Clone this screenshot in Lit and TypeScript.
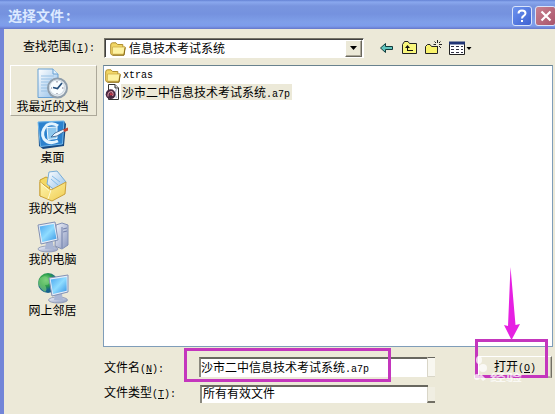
import { LitElement, html, css, svg } from "lit";
import { customElement, property } from "lit/decorators.js";

const folder = html`<svg width="16" height="14" viewBox="0 0 16 14">
  <path d="M.7 3Q.7 .8 2.500 .8H6L7.500 2.500H12.800V5H15L13.800 13H2.500Q.7 13 .7 11Z" fill="#f1d665" stroke="#b08f30"/>
  <path d="M2.500 5H15.200L13.700 12.200H2.400Z" fill="#fdf2a2" stroke="#cfae4a" stroke-width=".8"/>
  <path d="M15.200 5.500L14 13.200H2.500" fill="none" stroke="#8c6d1a"/></svg>`;

const fileIcon = html`<svg width="16" height="16" viewBox="0 0 16 16">
  <path d="M3.500 .5H10L13.500 4V15.500H3.500Z" fill="#fff" stroke="#333"/>
  <path d="M10 .5V4H13.500" fill="#ddd" stroke="#333"/>
  <path d="M12 5Q9 8 11.500 14" fill="none" stroke="#b9c0d8" stroke-width="1.400"/>
  <circle cx="5.600" cy="10.200" r="4.900" fill="#472840"/><path d="M3 12.500Q2.500 8 6.500 7.500Q9 9 7.500 12" fill="none" stroke="#d18b9b" stroke-width="1.200"/>
  <path d="M5.500 8.500L8.500 11L4.500 11.500Z" fill="#c23a4a"/></svg>`;

const defs = svg`<defs>
  <linearGradient id="s" x1="0" y1="0" x2="1" y2="1"><stop offset="0" stop-color="#4aa5ee"/><stop offset=".5" stop-color="#8fdcff"/><stop offset="1" stop-color="#3794e4"/></linearGradient>
  <linearGradient id="p" x1="0" y1="0" x2="1" y2="1"><stop offset="0" stop-color="#fff"/><stop offset="1" stop-color="#8cbce8"/></linearGradient>
  <linearGradient id="y" x1="0" y1="0" x2="1" y2="1"><stop offset="0" stop-color="#fff6b0"/><stop offset="1" stop-color="#efcc50"/></linearGradient>
  <linearGradient id="g" x1="0" y1="0" x2="1" y2="1"><stop offset="0" stop-color="#f4f6fc"/><stop offset="1" stop-color="#8795bd"/></linearGradient>
  <radialGradient id="e" cx=".4" cy=".35"><stop offset="0" stop-color="#8fe48d"/><stop offset=".6" stop-color="#2b9d4a"/><stop offset="1" stop-color="#17628c"/></radialGradient>
</defs>`;

const art: Record<string, unknown> = {
  recent: svg`<path d="M1 1H16L21 6V29.500H1Z" fill="url(#p)" stroke="#69a0d2"/><path d="M16 1V6H21" fill="#e1f1fc" stroke="#69a0d2"/>
    <path d="M4 8H17M4 11H15M4 14H12M4 17H11M4 20H10M4 23H10" stroke="#99c1e5"/>
    <circle cx="20.500" cy="20" r="9.500" fill="#e9edf0" stroke="#8e9dab" stroke-width="2"/><circle cx="20" cy="19.500" r="7.500" fill="#f9fdff" stroke="#c8d4df"/>
    <path d="M25 15L20.500 20.500L16 19.500" fill="none" stroke="#254f7c" stroke-width="1.700"/><path d="M20 13V14.500M20 25V26M14 20H15M25 20H26.500" stroke="#777788"/>`,
  desktop: svg`<path d="M1 3L27 2L29 5L27 27L6 30L2 27Z" fill="#164a83"/><path d="M1 3L27 2L25.500 25L3.500 27.500Z" fill="#2c82ce" stroke="#72b9ed"/>
    <path d="M21 7Q16 3 10 6Q3 13 7 20Q12 26 21 22" fill="none" stroke="#e4f5ff" stroke-width="3"/>
    <path d="M10 8.500L20 8V19.500L11 20.500Z" fill="#8fc8ee" stroke="#f1faff"/>
    <path d="M14 18L18 14L27 10L28 12L20 17Z" fill="#eef7ff" stroke="#3f6a96" stroke-width=".9"/><path d="M26 10.500L31 8.500L31 11.500L27.500 13Z" fill="#c34432"/>`,
  docs: svg`<path d="M3 10L9 7L13 9L12 27L3 26Z" fill="#f3d865" stroke="#c99d28"/>
    <path d="M12 2L20 1L29 12L20 22L10 14Z" fill="url(#p)" stroke="#78add7"/><path d="M15 6L23 12M14 9L21 15" stroke="#83bce9"/>
    <path d="M3 12L14 20L29 12L28 24L15 31L3 26Z" fill="url(#y)" stroke="#cba13a"/><path d="M14 20L11 29M3.500 13L12 20.500" stroke="#fffbd4" fill="none"/>`,
  computer: svg`<path d="M19 4L25 2L31 4V24L25 28L18 25Z" fill="url(#g)" stroke="#8290b4"/><path d="M25 6V27M26 8L30 7M26 11L30 10" stroke="#7381aa"/>
    <ellipse cx="11" cy="28" rx="10" ry="3" fill="url(#g)" stroke="#8792b0" stroke-width=".8"/><path d="M9 21H16L17 28H8Z" fill="#a9b6d4"/>
    <path d="M1 4L18 1L21 19L4 23Z" fill="#e6edf8" stroke="#8291b4"/><path d="M2.600 5.600L16.800 3L19.500 17.700L5.200 21Z" fill="url(#s)"/>`,
  network: svg`<circle cx="11" cy="11" r="10" fill="url(#e)"/><path d="M3 6Q9 2 11 7Q14 13 8 13Q11 18 8 20Q2 16 1 11" fill="#76cb76" opacity=".7"/>
    <ellipse cx="21" cy="28" rx="9.500" ry="3" fill="url(#g)" stroke="#8792b0" stroke-width=".8"/><path d="M18 22H25L26 28H17Z" fill="#a9b6d4"/>
    <path d="M12 6L31 3L31 20L15 24Z" fill="#e6edf8" stroke="#8291b4"/><path d="M13.700 7.600L29.600 5L29.700 18.700L16 22Z" fill="url(#s)"/>`,
};

@customElement("place-item")
class PlaceItem extends LitElement {
  @property() label = "";
  @property() kind = "recent";
  static styles = css`
    :host { display: flex; flex-direction: column; align-items: center; height: 51px; padding-top: 3px; box-sizing: border-box; }
    .label { font: 12px/16px "Noto Sans CJK SC", sans-serif; margin-top: -2px; margin-left: -2px; color: #000; white-space: nowrap; }
    svg { display: block; flex: none; margin-left: -2px; }
  `;
  render() {
    return html`<svg width="32" height="32" viewBox="0 0 32 32">${defs}${art[this.kind]}</svg><span class="label">${this.label}</span>`;
  }
}

@customElement("app-root")
class AppRoot extends LitElement {
  static styles = css`
    :host { display: block; width: 555px; height: 414px; overflow: hidden; position: relative; background: #ece9d8;
      font: 12px/16px "Noto Sans CJK SC", sans-serif; color: #000; }
    * { box-sizing: border-box; }
    svg { display: block; flex: none; }
    .window { height: 414px; display: flex; flex-direction: column; }
    .title { height: 29px; display: flex; align-items: center; padding: 3px 0 0 8px; color: #dce9ff; font-size: 14px; font-weight: bold;
      background: linear-gradient(#6482d4 0, #8aa8ee 2px, #7995df 6px, #7592df 14px, #7f9fe9 22px, #7d9ceb 26px, #6577ca 29px); }
    .title .name { flex: 1; margin-top: -2px; }
    .colon { padding-left: 2px; }
    .cap { width: 20px; height: 20px; border: 1px solid #d9e4fb; border-radius: 3px; display: grid; place-items: center; flex: none; }
    .help { background: linear-gradient(135deg, #6c93ef, #3f62d2); margin-right: 3px; }
    .close { background: linear-gradient(135deg, #c98290, #a8546a); width: 21px; margin-right: -1px; }
    .body { flex: 1; border-left: 4px solid #7285d8; display: grid; grid-template-columns: 99px 452px; grid-template-rows: 36px 282px 1fr; }
    .look { text-align: right; padding: 9px 8px 0 0; white-space: nowrap; }
    .mono { font-family: "Liberation Mono", monospace; font-size: 10px; }
    .tools { display: flex; align-items: flex-start; padding: 9px 0 0 1px; }
    .select { width: 260px; height: 20px; background: #fff; border: 1px solid; border-color: #777568 #fff #fff #777568; box-shadow: inset 1px 1px #404040; display: flex; align-items: center; padding: 1px 1px 0 5px; }
    .select .value { flex: 1; padding-left: 3px; margin-top: -1px; }
    .drop { width: 17px; height: 17px; background: #ece9d8; border: 1px solid; border-color: #fff #69675d #69675d #fff; box-shadow: inset -1px -1px #aca899; display: grid; place-items: center; margin-bottom: 1px; }
    .bar { display: flex; gap: 7px; padding: 2px 0 0 15px; }
    .places { padding-left: 6px; padding-right: 6px; }
    .recent { border: 1px solid; border-color: #fff #aca899 #aca899 #fff; padding-top: 2px; }
    .list { background: #fff; border: 1px solid #7f9db9; border-top-color: #69828e; width: 450px; padding: 2px 0 0 1px; }
    .file { display: flex; align-items: center; height: 16px; }
    .file .name { padding: 0 2px; height: 16px; white-space: nowrap; }
    .file .sel { background: #ece9d8; padding-left: 1px; }
    .form { grid-column: 1 / 3; display: grid; grid-template-columns: 96px 235px 1fr; grid-template-rows: 20px 18px; row-gap: 8px; padding-left: 100px; padding-top: 10px; }
    .form .lab { white-space: nowrap; padding-top: 2px; }
    .form .low { padding-top: 0; margin-top: -1px; }
    .field { background: #fff; border-top: 2px solid #68675f; border-left: 2px solid #8a887d; display: flex; align-items: center; white-space: nowrap; width: 228px; position: relative; }
    .field.nm { margin-left: -1px; width: 229px; }
    .field.type { height: 18px; line-height: 12px; align-items: flex-start; padding-left: 1px; }
    .tick { position: absolute; right: -7px; bottom: 0; width: 8px; height: 20px; background: #f8f7f0; border-left: 1px solid #d9d6c8; }
    .nm .tick { border-top: 1px solid #68675f; border-bottom: 1px solid #d9d6c8; }
    .type .tick { height: 16px; bottom: 0; border-bottom: 2px solid #716f64; background: #f0eee2; }
    .open { width: 74px; height: 22px; margin: -1px 0 0 43px; border: 1px solid; border-color: #fff #716f64 #aca899 #fff; box-shadow: inset -1px -1px #b8b5a5; display: flex; justify-content: center; align-items: center; white-space: nowrap; }
    .marks { position: absolute; left: 0; top: 0; pointer-events: none; }
    .wm { font: bold 9px "Noto Sans CJK SC", sans-serif; }
  `;
  render() {
    return html`
    <div class="window">
      <div class="title"><span class="name">选择文件<span class="colon">:</span></span>
        <div class="cap help"><svg width="14" height="14" viewBox="0 0 14 14"><path d="M3.500 4.500Q3.500 1.500 7 1.500Q10.500 1.500 10.500 4.300Q10.500 6 8.500 7Q7 7.800 7 9.500M7 11V13" fill="none" stroke="#fff" stroke-width="2"/></svg></div>
        <div class="cap close"><svg width="14" height="14" viewBox="0 0 14 14"><path d="M2.500 2.500L11.500 11.500M11.500 2.500L2.500 11.500" stroke="#fff" stroke-width="2.200"/></svg></div>
      </div>
      <div class="body">
        <div class="look">查找范围<span class="mono">(<u>I</u>):</span></div>
        <div class="tools">
          <div class="select">${folder}<span class="value">信息技术考试系统</span>
            <div class="drop"><svg width="7" height="4" viewBox="0 0 7 4"><path d="M0 0H7L3.500 4Z"/></svg></div></div>
          <div class="bar">
            <svg width="16" height="16" viewBox="0 0 16 16"><path d="M1.500 8L6.500 3.500V6.500H13.500V9.500H6.500V12.500Z" fill="#5fc4bd" stroke="#123c3c"/></svg>
            <svg width="16" height="16" viewBox="0 0 16 16"><path d="M.5 4.500L2.500 1.500H6L7.500 3.500H14.500V13.500H.5Z" fill="#f9f77c" stroke="#222222"/><path d="M5.500 5L3 8H5V11H11V10H6V8H8Z" fill="#111111"/></svg>
            <svg width="17" height="16" viewBox="0 0 17 16"><path d="M.5 6.500L2.500 4.500H5L6.500 6.500H12.500V13.500H.5Z" fill="#f9f36c" stroke="#222222"/><path d="M12.500 0V3M12.500 6V9M8.500 4.500H11M14 4.500H17M9.500 1.500L11 3M14 6L16 8M15.500 1.500L14 3M11 6L10 7" stroke="#222222"/></svg>
            <svg width="24" height="16" viewBox="0 0 24 16"><path d="M.5 2.500H15.500V14.500H.5Z" fill="#fff" stroke="#222222"/><path d="M0 3H16" stroke="#203474" stroke-width="3"/><path d="M2 6.500H5M7 6.500H10M12 6.500H14M2 9.500H5M7 9.500H10M12 9.500H14M2 12.500H5M7 12.500H10M12 12.500H14" stroke="#333344"/><path d="M17.500 7H22.500L20 10Z"/></svg>
          </div>
        </div>
        <div class="places">
          <place-item class="recent" kind="recent" label="我最近的文档"></place-item>
          <place-item kind="desktop" label="桌面"></place-item>
          <place-item kind="docs" label="我的文档"></place-item>
          <place-item kind="computer" label="我的电脑"></place-item>
          <place-item kind="network" label="网上邻居"></place-item>
        </div>
        <div class="list">
          <div class="file">${folder}<span class="name mono">xtras</span></div>
          <div class="file">${fileIcon}<span class="name sel">沙市二中信息技术考试系统<span class="mono">.a7p</span></span></div>
        </div>
        <div class="form">
          <div class="lab">文件名<span class="mono">(<u>N</u>):</span></div>
          <div class="field nm"><span>沙市二中信息技术考试系统<span class="mono">.a7p</span></span><i class="tick"></i></div>
          <div class="open"><span>打开<span class="mono">(<u>O</u>)</span></span></div>
          <div class="lab low">文件类型<span class="mono">(<u>T</u>):</span></div>
          <div class="field type">所有有效文件<i class="tick"></i></div>
        </div>
      </div>
    </div>
    <svg class="marks" width="555" height="414" viewBox="0 0 555 414">
      <rect x="185.500" y="349.500" width="204" height="31" fill="none" stroke="#c436bd" stroke-width="3"/>
      <rect x="476.500" y="340.500" width="70" height="36" fill="none" stroke="#c436bd" stroke-width="3"/>
      <path d="M510.500 267L515.500 325L520 324L511.500 340L504 325L508 326Z" fill="#e620e2"/>
      <g fill="#fff" opacity=".75"><ellipse cx="479" cy="360" rx="3" ry="4"/><circle cx="483" cy="368" r="4"/><circle cx="477" cy="377" r="3"/><path d="M481 374L486 379L483 381L479 377Z"/><text class="wm" x="490" y="380.500" textLength="32" lengthAdjust="spacingAndGlyphs">经验</text></g>
    </svg>`;
  }
}
